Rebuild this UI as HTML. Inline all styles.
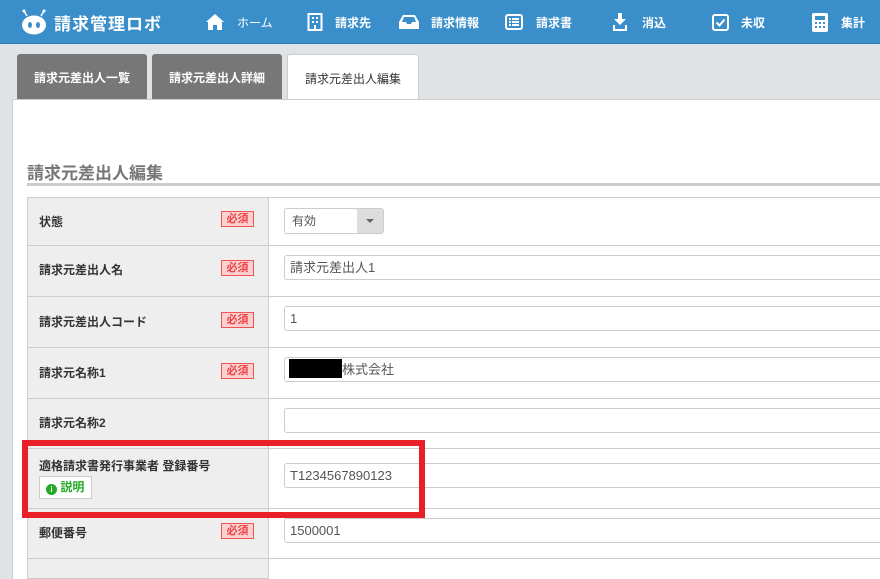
<!DOCTYPE html>
<html><head><meta charset="utf-8"><style>
*{box-sizing:border-box;margin:0;padding:0}
body{width:880px;height:566px;overflow:hidden;background:#dfe3e6;font-family:"Liberation Sans","Noto Sans CJK JP",sans-serif;position:relative}
.nav{position:absolute;left:0;top:0;width:880px;height:44px;background:#3a8fcb;border-bottom:1px solid #2f7ab0;color:#fff}
.nav .it{position:absolute;top:0;height:44px;display:flex;align-items:center;font-size:12px;font-weight:bold}
.nav svg{display:block}
.tab{position:absolute;top:54px;height:46px;border-radius:3px 3px 0 0;font-size:12px;display:flex;align-items:center;justify-content:center}
.tab.g{background:#777;color:#fff;font-weight:bold}
.tab.w{background:#fff;color:#333;border:1px solid #ccc;border-bottom:none;height:47px}
.panel{position:absolute;left:12px;top:99px;width:880px;height:480px;background:#fff;border-left:1px solid #ccc;border-top:1px solid #ccc}
.title{position:absolute;left:27px;top:159px;font-size:17px;color:#777;font-weight:bold}
.uline{position:absolute;left:27px;top:183px;width:853px;height:3px;background:#ccc}
.lab{position:absolute;left:27px;width:242px;background:#eee;border:1px solid #ccc;border-top:none;font-size:12px;font-weight:bold;color:#333}
.lab span.t{position:absolute;left:11px}
.val{position:absolute;left:268px;width:620px;border-bottom:1px solid #ccc}
.req{position:absolute;left:193px;width:33px;height:16px;border:1px solid #e55;background:#fbd0d0;color:#e44;font-size:11px;text-align:center;line-height:14px;font-weight:bold}
.inp{position:absolute;left:284px;width:620px;height:25px;border:1px solid #ccc;border-radius:3px;background:#fff;font-size:13px;color:#555;padding-left:5px;line-height:23px}
</style></head><body>
<div class="nav">
 <div class="it" style="left:19px">
  <svg width="30" height="28" viewBox="0 0 30 28"><line x1="5" y1="3" x2="8" y2="8" stroke="#fff" stroke-width="1.5"/><line x1="25" y1="3" x2="22" y2="8" stroke="#fff" stroke-width="1.5"/><circle cx="5" cy="3" r="1.5" fill="#fff"/><circle cx="25" cy="3" r="1.5" fill="#fff"/><ellipse cx="15" cy="17" rx="12" ry="9.5" fill="#fff"/><ellipse cx="11" cy="17" rx="2" ry="3" fill="#3a8fcb"/><ellipse cx="19" cy="17" rx="2" ry="3" fill="#3a8fcb"/></svg>
  <span style="font-size:17px;margin-left:5px;letter-spacing:1px">請求管理ロボ</span></div>
 <div class="it" style="left:205px"><svg width="20" height="18" viewBox="0 0 20 18"><path d="M10 1 L1 9 L3 9 L3 17 L8 17 L8 12 L12 12 L12 17 L17 17 L17 9 L19 9 Z" fill="#fff"/></svg><span style="margin-left:12px;font-weight:normal">ホーム</span></div>
 <div class="it" style="left:307px"><svg width="16" height="18" viewBox="0 0 16 18"><rect x="1.5" y="1" width="13" height="16" fill="none" stroke="#fff" stroke-width="2"/><g fill="#fff"><rect x="5" y="4" width="2" height="2"/><rect x="9" y="4" width="2" height="2"/><rect x="5" y="8" width="2" height="2"/><rect x="9" y="8" width="2" height="2"/><rect x="7" y="12" width="2" height="5"/></g></svg><span style="margin-left:12px">請求先</span></div>
 <div class="it" style="left:399px"><svg width="20" height="16" viewBox="0 0 20 16"><path d="M4 1 L16 1 L20 8 L20 15 L0 15 L0 8 Z" fill="#fff"/><path d="M3 8 L7 8 L8 10 L12 10 L13 8 L17 8 L15 3 L5 3 Z" fill="#3a8fcb"/></svg><span style="margin-left:12px">請求情報</span></div>
 <div class="it" style="left:505px"><svg width="18" height="16" viewBox="0 0 18 16"><rect x="1" y="1" width="16" height="14" rx="2" fill="none" stroke="#fff" stroke-width="2"/><g fill="#fff"><rect x="4" y="4" width="2" height="2"/><rect x="7" y="4" width="7" height="2"/><rect x="4" y="7" width="2" height="2"/><rect x="7" y="7" width="7" height="2"/><rect x="4" y="10" width="2" height="2"/><rect x="7" y="10" width="7" height="2"/></g></svg><span style="margin-left:13px">請求書</span></div>
 <div class="it" style="left:612px"><svg width="16" height="20" viewBox="0 0 16 20"><path d="M6 1 L10 1 L10 7 L14 7 L8 13 L2 7 L6 7 Z" fill="#fff"/><path d="M2 13 L2 18 L14 18 L14 13" fill="none" stroke="#fff" stroke-width="2"/></svg><span style="margin-left:14px">消込</span></div>
 <div class="it" style="left:712px"><svg width="17" height="17" viewBox="0 0 17 17"><rect x="1" y="1" width="15" height="15" rx="2" fill="none" stroke="#fff" stroke-width="2"/><path d="M4.5 8.5 L7.5 11.5 L12.5 5.5" fill="none" stroke="#fff" stroke-width="2"/></svg><span style="margin-left:12px">未収</span></div>
 <div class="it" style="left:812px"><svg width="16" height="19" viewBox="0 0 16 19"><rect x="0" y="0" width="16" height="19" rx="2" fill="#fff"/><rect x="3" y="3" width="10" height="4" fill="#3a8fcb"/><g fill="#3a8fcb"><rect x="3" y="9" width="2" height="2"/><rect x="7" y="9" width="2" height="2"/><rect x="11" y="9" width="2" height="2"/><rect x="3" y="13" width="2" height="2"/><rect x="7" y="13" width="2" height="2"/><rect x="11" y="13" width="2" height="2"/></g></svg><span style="margin-left:13px">集計</span></div>
</div>
<div class="tab g" style="left:17px;width:130px">請求元差出人一覧</div>
<div class="tab g" style="left:152px;width:130px">請求元差出人詳細</div>
<div class="tab w" style="left:287px;width:132px">請求元差出人編集</div>
<div class="panel"></div>
<div class="title">請求元差出人編集</div>
<div class="uline"></div>
<div style="position:absolute;left:27px;top:197px;width:853px;height:1px;background:#ccc"></div>

<div class="lab" style="top:198px;height:48px"><span class="t" style="top:15px">状態</span><span class="req" style="top:13px">必須</span></div>
<div class="val" style="top:198px;height:48px"></div>
<div style="position:absolute;left:284px;top:208px;width:100px;height:26px;border:1px solid #ccc;border-radius:3px;background:#fff;font-size:12px;color:#555;padding-left:7px;line-height:24px">有効<div style="position:absolute;right:0;top:0;width:26px;height:24px;background:#ddd;"><div style="position:absolute;left:9px;top:10px;border-left:4px solid transparent;border-right:4px solid transparent;border-top:4px solid #666"></div></div></div>

<div class="lab" style="top:246px;height:51px"><span class="t" style="top:15px">請求元差出人名</span><span class="req" style="top:14px">必須</span></div>
<div class="val" style="top:246px;height:51px"></div>
<div class="inp" style="top:255px">請求元差出人1</div>

<div class="lab" style="top:297px;height:51px"><span class="t" style="top:16px">請求元差出人コード</span><span class="req" style="top:15px">必須</span></div>
<div class="val" style="top:297px;height:51px"></div>
<div class="inp" style="top:306px">1</div>

<div class="lab" style="top:348px;height:51px"><span class="t" style="top:16px">請求元名称1</span><span class="req" style="top:15px">必須</span></div>
<div class="val" style="top:348px;height:51px"></div>
<div class="inp" style="top:357px;padding-left:4px"><span style="display:inline-block;width:53px;height:19px;background:#000;vertical-align:-4px"></span>株式会社</div>

<div class="lab" style="top:399px;height:50px"><span class="t" style="top:15px">請求元名称2</span></div>
<div class="val" style="top:399px;height:50px"></div>
<div class="inp" style="top:408px"></div>

<div class="lab" style="top:449px;height:60px"><span class="t" style="top:8px">適格請求書発行事業者 登録番号</span>
 <div style="position:absolute;left:11px;top:27px;width:53px;height:23px;border:1px solid #ccc;background:#fff;color:#2a2;font-size:12px;line-height:21px;padding-left:6px"><span style="display:inline-block;width:11px;height:11px;border-radius:50%;background:#2a2;color:#fff;font-size:8px;line-height:11px;text-align:center;vertical-align:-1px">i</span> 説明</div></div>
<div class="val" style="top:449px;height:60px"></div>
<div class="inp" style="top:463px">T1234567890123</div>

<div class="lab" style="top:509px;height:50px"><span class="t" style="top:15px">郵便番号</span><span class="req" style="top:14px">必須</span></div>
<div class="val" style="top:509px;height:50px"></div>
<div class="inp" style="top:518px">1500001</div>
<div class="lab" style="top:559px;height:20px"></div>

<div style="position:absolute;left:22px;top:440px;width:403px;height:78px;border:6px solid #e8202a"></div>
</body></html>
